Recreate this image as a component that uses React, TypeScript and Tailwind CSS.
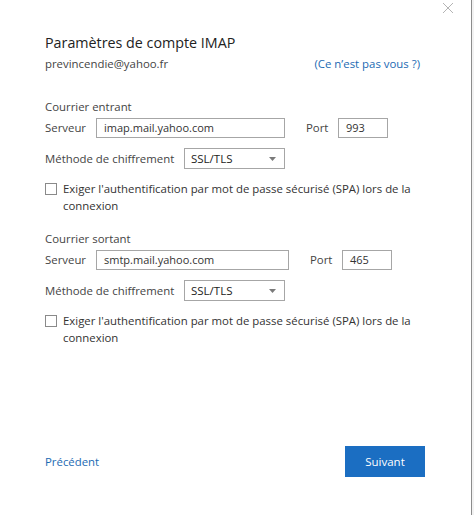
import React from "react"

const font = { fontFamily: '"Open Sans", "Noto Sans", sans-serif' }

function TextBox({ value, className }: { value: string; className: string }) {
  return (
    <div
      className={`h-[20px] border border-[#a6a6a6] bg-white pl-[7px] text-[11px] leading-[18px] text-[#333] ${className}`}
    >
      {value}
    </div>
  )
}

function Select({ value }: { value: string }) {
  return (
    <div className="flex h-[21px] w-[101px] items-center justify-between border border-[#a6a6a6] bg-white pl-[6px] pr-[8px] text-[11.5px] text-[#222]">
      <span>{value}</span>
      <svg width="7" height="4" viewBox="0 0 7 4">
        <path d="M0 0 L7 0 L3.5 4 Z" fill="#7a7a7a" />
      </svg>
    </div>
  )
}

function Checkbox() {
  return (
    <div className="flex items-start gap-[6px]">
      <div className="mt-[3px] h-[12px] w-[12px] shrink-0 border border-[#8a8a8a] bg-white" />
      <p className="text-[11.4px] leading-[17px] text-[#333]">
        Exiger l'authentification par mot de passe sécurisé (SPA) lors de la connexion
      </p>
    </div>
  )
}

function MailSection({
  title,
  server,
  port,
  serverWidth,
}: {
  title: string
  server: string
  port: string
  serverWidth: string
}) {
  return (
    <section className="text-[11.4px] text-[#444]">
      <h2 className="leading-[16px] text-[#444]">{title}</h2>
      <div className="mt-[3px] flex items-center">
        <span className="w-[51px]">Serveur</span>
        <TextBox value={server} className={serverWidth} />
        <span className="ml-[21px] w-[32px]">Port</span>
        <TextBox value={port} className="w-[50px]" />
      </div>
      <div className="mt-[10px] flex items-center">
        <span className="w-[139px]">Méthode de chiffrement</span>
        <Select value="SSL/TLS" />
      </div>
      <div className="mt-[11px]">
        <Checkbox />
      </div>
    </section>
  )
}

export default function App() {
  return (
    <div className="flex h-[515px] w-[475px] bg-white" style={font}>
      <div className="relative flex w-[472px] flex-col border-r border-[#8c8c8c] pl-[45px] pr-[46px]">
        <button className="absolute right-[17px] top-[2px] text-[#b4b4b4]">
          <svg width="12" height="12" viewBox="0 0 12 12">
            <path d="M1 1 L11 11 M11 1 L1 11" stroke="currentColor" strokeWidth="1" />
          </svg>
        </button>

        <h1 className="mt-[33px] text-[14.3px] leading-[20px] text-[#222]">
          Paramètres de compte IMAP
        </h1>
        <div className="mt-[3px] flex items-center justify-between pr-[5px] text-[11.4px] leading-[16px]">
          <span className="text-[#444]">previncendie@yahoo.fr</span>
          <a className="text-[#1b6ab3]">(Ce n’est pas vous ?)</a>
        </div>

        <div className="mt-[27px]">
          <MailSection
            title="Courrier entrant"
            server="imap.mail.yahoo.com"
            port="993"
            serverWidth="w-[189px]"
          />
        </div>
        <div className="mt-[17px]">
          <MailSection
            title="Courrier sortant"
            server="smtp.mail.yahoo.com"
            port="465"
            serverWidth="w-[193px]"
          />
        </div>

        <div className="mt-auto mb-[38px] flex items-center justify-between">
          <a className="text-[11.4px] text-[#1b6ab3]">Précédent</a>
          <button className="h-[31px] w-[80px] bg-[#1b6ec2] text-[11.5px] text-white">
            Suivant
          </button>
        </div>
      </div>
      <div className="w-[2px] bg-[#f2f2f2]" />
    </div>
  )
}
